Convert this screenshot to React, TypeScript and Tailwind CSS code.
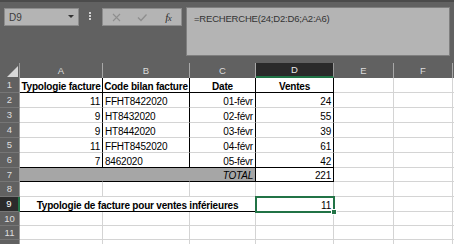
import React from "react";

type Cell = {
  t?: string;
  w: string;
  a?: "l" | "c" | "r";
  b?: boolean;
  i?: boolean;
  fill?: boolean;
  rb?: "k" | "g" | "f";
  bb?: "k" | "g";
  sel?: boolean;
};

const W = ["w-[83px]", "w-[87px]", "w-[66px]", "w-[78px]", "w-[60px]", "w-[59px]"];

function DataCell({ c }: { c: Cell }) {
  const align = c.a === "c" ? "justify-center" : c.a === "r" ? "justify-end" : "justify-start";
  const rb = c.rb === "k" ? "border-r-black" : c.rb === "f" ? "border-r-[#a6a6a6]" : "border-r-[#d4d4d4]";
  const bb = c.bb === "k" ? "border-b-black" : "border-b-[#d4d4d4]";
  const bg = c.fill ? "bg-[#a6a6a6]" : "bg-white";
  return (
    <div
      className={`${c.w} ${align} ${rb} ${bb} ${bg} ${c.b ? "font-bold" : "font-normal"} ${c.i ? "italic" : "not-italic"} ${c.sel ? "relative" : ""} shrink-0 flex items-end whitespace-nowrap border-r border-b px-[2px] text-[10px] leading-none tracking-[-0.2px] text-black`}
    >
      <span>{c.t}</span>
      {c.sel && (
        <>
          <div className="absolute -left-[1px] -top-[1px] w-[80px] h-[17px] border-2 border-[#217346]" />
          <div className="absolute -right-[4px] -bottom-[4px] w-[6px] h-[6px] bg-[#217346] border border-white" />
        </>
      )}
    </div>
  );
}

function Row({ n, h, cells, sel }: { n: string; h: string; cells: Cell[]; sel?: boolean }) {
  return (
    <div className={`flex ${h} shrink-0`}>
      <div
        className={`w-[20px] shrink-0 flex items-center justify-center border-b border-b-[#767676] text-[9.5px] leading-none ${
          sel
            ? "bg-[#2b2b2b] text-white border-r-2 border-r-[#217346]"
            : "bg-[#616161] text-[#dedede] border-r border-r-[#9a9a9a]"
        }`}
      >
        {n}
      </div>
      {cells.map((c, k) => (
        <DataCell key={k} c={c} />
      ))}
      <div className="flex-1 bg-white border-b border-b-[#d4d4d4]" />
    </div>
  );
}

const empty = (): Cell[] => W.map((w) => ({ w }));

const data: [string, string, string, string][] = [
  ["11", "FFHT8422020", "01-févr", "24"],
  ["9", "HT8432020", "02-févr", "55"],
  ["9", "HT8442020", "03-févr", "39"],
  ["11", "FFHT8452020", "04-févr", "61"],
  ["7", "8462020", "05-févr", "42"],
];

export default function App() {
  const headers = ["A", "B", "C", "D", "E", "F"];
  const row1: Cell[] = [
    { w: W[0], t: "Typologie facture", a: "c", b: true, rb: "k", bb: "k" },
    { w: W[1], t: "Code bilan facture", a: "c", b: true, rb: "k", bb: "k" },
    { w: W[2], t: "Date", a: "c", b: true, rb: "k", bb: "k" },
    { w: W[3], t: "Ventes", a: "c", b: true, rb: "k", bb: "k" },
    { w: W[4] },
    { w: W[5] },
  ];
  const dataRows: Cell[][] = data.map((d, k) => {
    const bb = k === 4 ? "k" : "g";
    return [
      { w: W[0], t: d[0], a: "r", rb: "k", bb },
      { w: W[1], t: d[1], a: "l", rb: "k", bb },
      { w: W[2], t: d[2], a: "r", rb: "k", bb },
      { w: W[3], t: d[3], a: "r", rb: "k", bb },
      { w: W[4] },
      { w: W[5] },
    ] as Cell[];
  });
  const row7: Cell[] = [
    { w: W[0], fill: true, rb: "f", bb: "k" },
    { w: W[1], fill: true, rb: "f", bb: "k" },
    { w: W[2], fill: true, t: "TOTAL", a: "r", i: true, rb: "k", bb: "k" },
    { w: W[3], t: "221", a: "r", rb: "k", bb: "k" },
    { w: W[4] },
    { w: W[5] },
  ];
  const row9: Cell[] = [
    { w: "w-[236px]", t: "Typologie de facture pour ventes inférieures", a: "c", b: true, bb: "k" },
    { w: W[3], t: "11", a: "r", sel: true },
    { w: W[4] },
    { w: W[5] },
  ];

  return (
    <div className="w-[454px] h-[244px] overflow-hidden bg-[#616161] flex flex-col font-['Liberation_Sans',Arial,sans-serif]">
      {/* formula toolbar */}
      <div className="h-[63px] shrink-0 flex items-start border-t-2 border-t-[#4b4b4b] pl-[4px] pt-[5px]">
        <div className="mt-[1px] w-[75px] h-[18px] bg-[#b4b4b4] border border-[#8c8c8c] flex items-center pl-[4px] pr-[4px] text-[10px] text-[#3c3c3c]">
          <span className="flex-1">D9</span>
          <svg width="6" height="4" viewBox="0 0 6 4">
            <polygon points="0,0 6,0 3,3" fill="#333" />
          </svg>
        </div>
        <div className="ml-[10px] mt-[5px] flex flex-col gap-[1px]">
          <div className="w-[2px] h-[2px] bg-[#d0d0d0]" />
          <div className="w-[2px] h-[2px] bg-[#d0d0d0]" />
          <div className="w-[2px] h-[2px] bg-[#d0d0d0]" />
        </div>
        <div className="ml-[11px] mt-[1px] w-[80px] h-[18px] bg-[#b4b4b4] border border-[#8c8c8c] flex items-center">
          <div className="w-[26px] flex justify-center pl-[1px]">
            <svg width="9" height="9" viewBox="0 0 9 9">
              <path d="M1 1 L8 8 M8 1 L1 8" stroke="#8e8e8e" strokeWidth="1.1" />
            </svg>
          </div>
          <div className="w-[27px] flex justify-center">
            <svg width="10" height="9" viewBox="0 0 10 9">
              <path d="M1 4.5 L4 7.5 L9.5 1.5" stroke="#8e8e8e" strokeWidth="1.3" fill="none" />
            </svg>
          </div>
          <div className="w-[26px] flex justify-center">
            <span className="font-['Liberation_Serif',serif] italic text-[11px] leading-none text-[#2e2e2e] tracking-[-0.5px]">
              f<span className="text-[9px]">x</span>
            </span>
          </div>
        </div>
        <div className="ml-[4px] w-[264px] h-[49px] bg-[#b4b4b4] border border-[#7f7f7f] pl-[7px] pt-[4px] text-[9.5px] tracking-[-0.2px] text-[#333333]">
          =RECHERCHE(24;D2:D6;A2:A6)
        </div>
      </div>

      {/* column headers */}
      <div className="flex h-[15px] shrink-0 text-[9.5px] leading-none">
        <div className="w-[20px] shrink-0 border-r border-r-[#9a9a9a] flex">
          <svg width="19" height="15" viewBox="0 0 19 15">
            <polygon points="18,3 18,14 7,14" fill="#d8d8d8" />
          </svg>
        </div>
        {headers.map((h, k) =>
          h === "D" ? (
            <div
              key={h}
              className={`${W[k]} shrink-0 flex items-center justify-center bg-[#2a2a2a] text-[#e8e8e8] border-b-2 border-b-[#217346] border-r border-r-[#9a9a9a] pt-[1px]`}
            >
              {h}
            </div>
          ) : (
            <div
              key={h}
              className={`${W[k]} shrink-0 flex items-center justify-center text-[#dcdcdc] border-r border-r-[#a8a8a8]`}
            >
              {h}
            </div>
          )
        )}
        <div className="flex-1" />
      </div>

      <Row n="1" h="h-[15px]" cells={row1} />
      {dataRows.map((r, k) => (
        <Row key={k} n={String(k + 2)} h="h-[15px]" cells={r} />
      ))}
      <Row n="7" h="h-[14px]" cells={row7} />
      <Row n="8" h="h-[15px]" cells={empty()} />
      <Row n="9" h="h-[15px]" cells={row9} sel />
      <Row n="10" h="h-[14px]" cells={empty()} />
      <Row n="11" h="h-[14px]" cells={empty()} />
      <Row n="" h="h-[15px]" cells={empty()} />
    </div>
  );
}
